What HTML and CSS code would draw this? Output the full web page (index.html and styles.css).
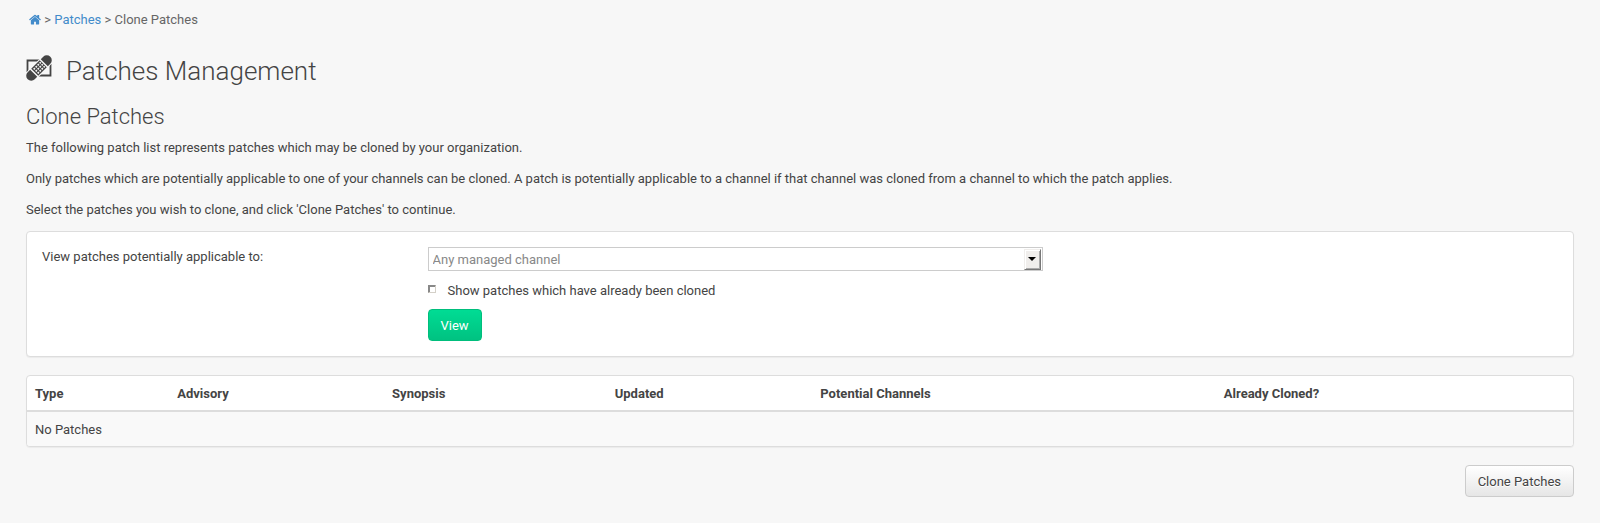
FILE: index.html
```html
<!DOCTYPE html>
<html lang="en">
<head>
<meta charset="utf-8">
<title>Clone Patches</title>
<link rel="stylesheet" href="styles.css">
</head>
<body>
<nav class="breadcrumb" aria-label="Breadcrumb">
  <a href="#" aria-label="Home"><svg class="home-icon" viewBox="0 0 26 22" aria-hidden="true"><path d="M22 12.500V21a1 1 0 0 1-1 1h-6v-6h-4v6H5a1 1 0 0 1-1-1v-8.500L13 5z"/><path d="M25.500 11.300l-1 1.200q-.4.400-.9 0L13 3.700 2.400 12.500q-.5.400-.9 0l-1-1.200q-.3-.5.100-.9L11.600 1.200q1.400-1.100 2.800 0L18 4.200V1.500q0-.5.500-.5h3q.5 0 .5.500v6l3.400 2.900q.4.400.100.900z"/></svg></a>
  &gt; <a href="#">Patches</a> &gt; Clone Patches
</nav>
<main>
  <h1 class="page-title">
    <svg class="patch-icon" viewBox="0 0 26 26" aria-hidden="true">
      <path class="frame" d="M1.500 17V5.500H14M12.500 20.500H24.500V9"/>
      <g transform="rotate(-45 13 13)">
        <rect class="halo" x="-3.500" y="7" width="33" height="12" rx="6"/>
        <path d="M5.500 8H2a5 5 0 0 0 0 10h3.500zM20.500 8H24a5 5 0 0 1 0 10h-3.500z"/>
        <rect x="7" y="8" width="12" height="10"/>
        <path class="holes" d="M8.300 10.200h10M8.300 13h10M8.300 15.800h10"/>
      </g>
    </svg>
    Patches Management
  </h1>
  <h2 class="section-title">Clone Patches</h2>
  <p>The following patch list represents patches which may be cloned by your organization.</p>
  <p>Only patches which are potentially applicable to one of your channels can be cloned. A patch is potentially applicable to a channel if that channel was cloned from a channel to which the patch applies.</p>
  <p>Select the patches you wish to clone, and click 'Clone Patches' to continue.</p>

  <form class="panel filter">
    <label class="filter-label" for="channel">View patches potentially applicable to:</label>
    <div class="filter-fields">
      <div class="select-box">
        <select id="channel"><option>Any managed channel</option></select>
        <span class="select-arrow" aria-hidden="true"></span>
      </div>
      <label class="check"><input type="checkbox">Show patches which have already been cloned</label>
      <button class="btn btn-success" type="button">View</button>
    </div>
  </form>

  <div class="panel list">
    <table>
      <colgroup><col class="c-type"><col class="c-advisory"><col class="c-synopsis"><col class="c-updated"><col class="c-channels"><col></colgroup>
      <thead><tr><th>Type</th><th>Advisory</th><th>Synopsis</th><th>Updated</th><th>Potential Channels</th><th>Already Cloned?</th></tr></thead>
      <tbody><tr><td colspan="6">No Patches</td></tr></tbody>
    </table>
  </div>

  <div class="actions"><button class="btn btn-default" type="button">Clone Patches</button></div>
</main>
</body>
</html>
```

FILE: styles.css
```css
* { box-sizing: border-box; }

body {
  margin: 0;
  padding: 10px 26px 26px;
  background: #f7f7f7;
  color: #444;
  font: 13px/19px Roboto, "Liberation Sans", sans-serif;
}

a { color: #428bca; text-decoration: none; }

.breadcrumb { padding-left: 3px; color: #666; }
.home-icon { width: 12px; height: 11px; fill: #428bca; vertical-align: -1px; }

.page-title {
  display: flex;
  align-items: center;
  gap: 14px;
  margin: 24px 0 0;
  font-size: 26px;
  font-weight: 300;
  line-height: 36px;
}
.patch-icon { width: 26px; height: 26px; fill: #444; overflow: visible; margin-bottom: 7px; }
.patch-icon .frame { fill: none; stroke: #444; stroke-width: 1.8; }
.patch-icon .halo { fill: #f7f7f7; }
.patch-icon .holes { stroke: #f7f7f7; stroke-width: 1.7; stroke-dasharray: 1.7 1.1; }

.section-title {
  margin: 12px 0 6px;
  font-size: 22px;
  font-weight: 300;
  line-height: 31px;
}

p { margin: 0 0 12px; }

.panel {
  margin-bottom: 18px;
  border: 1px solid #ddd;
  border-radius: 4px;
  background: #fff;
  box-shadow: 0 1px 1px rgba(0, 0, 0, .05);
}

.filter { display: grid; grid-template-columns: 3fr 5fr 4fr; padding: 15px 0; }
.filter-label { padding: 0 15px; }
.filter-fields { padding: 0 15px 0 14px; display: flex; flex-direction: column; align-items: flex-start; }

.select-box { position: relative; width: 100%; height: 24px; }
.select-box select {
  appearance: none;
  width: 100%;
  height: 24px;
  padding: 0 20px 0 4px;
  border: 1px solid #ccc;
  border-radius: 0;
  background: #fff;
  color: #888;
  font: inherit;
}
.select-arrow {
  position: absolute;
  top: 2px;
  right: 2px;
  width: 17px;
  height: 21px;
  border: 1px solid;
  border-color: #f0eeec #777 #777 #f0eeec;
  background: #f0eeec;
  box-shadow: inset 1px 1px #fff, inset -1px -1px #aaa;
  pointer-events: none;
}
.select-arrow::after {
  content: "";
  position: absolute;
  top: 7px;
  left: 3px;
  border: 4px solid transparent;
  border-top-color: #000;
  border-bottom: 0;
}

.check { display: flex; align-items: center; gap: 12px; margin: 10px 0 9px; }
.check input {
  appearance: none;
  width: 8px;
  height: 8px;
  margin: 0 0 3px;
  border: 1px solid;
  border-color: #888 #d4d0c8 #d4d0c8 #888;
  background: #fff;
  box-shadow: inset 1px 1px #888;
}

.btn {
  height: 32px;
  padding: 0 12px;
  border: 1px solid #ccc;
  border-radius: 4px;
  font: inherit;
}
.btn-default { color: #444; background: linear-gradient(#fff, #e6e6e6); text-shadow: 0 1px 0 #fff; }
.btn-success { color: #fff; border-color: #00be7c; background: linear-gradient(#00dc94, #00c281); }

.list { overflow: hidden; }
table { width: 100%; table-layout: fixed; border-collapse: separate; border-spacing: 0; }
th, td { padding: 8px 8px 7px; text-align: left; }
th { border-bottom: 2px solid #ddd; font-weight: 700; }
td { background: #f9f9f9; }
.c-type { width: 9.2%; }
.c-advisory { width: 13.9%; }
.c-synopsis { width: 14.4%; }
.c-updated { width: 13.3%; }
.c-channels { width: 26.1%; }

.actions { display: flex; justify-content: flex-end; }
```
